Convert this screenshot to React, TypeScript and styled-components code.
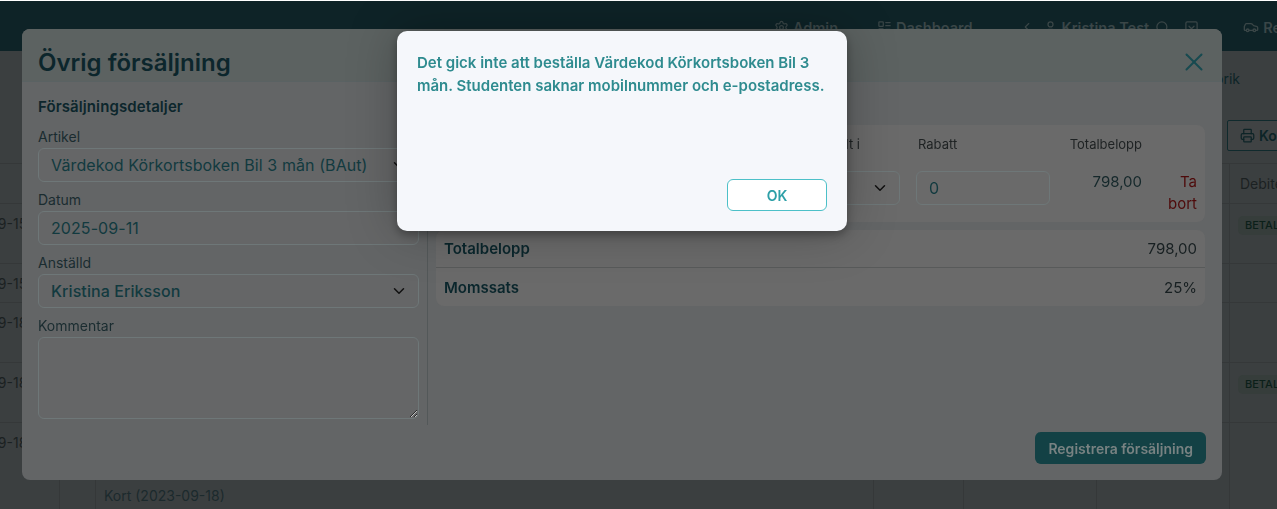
import { Car, ChevronDown, ChevronLeft, LayoutList, Printer, Search, Settings, SquareChevronDown, User, X } from "lucide-react";
import styled, { createGlobalStyle } from "styled-components";

const GlobalStyle = createGlobalStyle`
  html, body {
    margin: 0;
    height: 100%;
    background: #fff;
  }
  * {
    box-sizing: border-box;
  }
  body {
    font-family: Inter, "Noto Sans", sans-serif;
    overflow: hidden;
  }
`;

const rows = [
  { height: 60, date: "2023-09-15", badge: true },
  { height: 39, date: "2023-09-15", badge: false },
  { height: 60, date: "2023-09-18", badge: false },
  { height: 60, date: "2023-09-18", badge: true },
  { height: 90, date: "2023-09-18", badge: false, payment: "Kort (2023-09-18)" },
];

function App() {
  return (
    <>
      <GlobalStyle />
      <Page>
        <TopBar>
          <NavItem $after={39}>
            <Settings size={15} />
            Admin
          </NavItem>
          <NavItem $after={47}>
            <LayoutList size={15} />
            Dashboard
          </NavItem>
          <NavItem $after={9}>
            <ChevronLeft size={14} />
          </NavItem>
          <NavItem $after={6}>
            <User size={15} />
            Kristina Test
          </NavItem>
          <NavItem $after={14}>
            <Search size={15} />
          </NavItem>
          <NavItem $after={44}>
            <SquareChevronDown size={15} />
          </NavItem>
          <NavItem $after={-58}>
            <Car size={16} />
            Registrera
          </NavItem>
        </TopBar>
        <TabRow>Historik</TabRow>
        <ActionRow>
          <OutlineButton>
            <Printer size={15} />
            Kontoutskrift
          </OutlineButton>
        </ActionRow>
        <TableClip>
          <Row $height={40}>
            <Cell />
            <Cell />
            <Cell />
            <Cell />
            <Cell />
            <Cell />
            <Cell $left={10}>Debiterat</Cell>
          </Row>
          {rows.map((row, i) => (
            <Row key={i} $height={row.height}>
              <Cell $left={2}>{row.date}</Cell>
              <Cell />
              <PaymentCell $top={row.payment ? 63 : 10}>{row.payment}</PaymentCell>
              <Cell />
              <Cell />
              <Cell />
              <Cell>{row.badge && <Badge>BETALD</Badge>}</Cell>
            </Row>
          ))}
        </TableClip>
      </Page>

      <Modal>
        <ModalHeader>
          <ModalTitle>Övrig försäljning</ModalTitle>
          <CloseButton>
            <X size={30} strokeWidth={1.6} />
          </CloseButton>
        </ModalHeader>
        <ModalBody>
          <DetailsColumn>
            <SectionTitle>Försäljningsdetaljer</SectionTitle>
            <FieldLabel>Artikel</FieldLabel>
            <SelectBox>
              Värdekod Körkortsboken Bil 3 mån (BAut)
              <ChevronDown size={18} />
            </SelectBox>
            <FieldLabel>Datum</FieldLabel>
            <InputBox>2025-09-11</InputBox>
            <FieldLabel>Anställd</FieldLabel>
            <SelectBox $strong>
              Kristina Eriksson
              <ChevronDown size={18} />
            </SelectBox>
            <FieldLabel>Kommentar</FieldLabel>
            <CommentBox readOnly />
          </DetailsColumn>
          <SummaryColumn>
            <ItemPanel>
              <ItemHeading $right={40}>Betalt i</ItemHeading>
              <ItemHeading $indent={18}>Rabatt</ItemHeading>
              <ItemHeading $align="right">Totalbelopp</ItemHeading>
              <span />
              <ItemCell>
                <PaymentSelect>
                  <ChevronDown size={18} />
                </PaymentSelect>
              </ItemCell>
              <ItemCell $indent={16}>
                <DiscountInput>0</DiscountInput>
              </ItemCell>
              <Amount>798,00</Amount>
              <RemoveLink>Ta bort</RemoveLink>
            </ItemPanel>
            <TotalsPanel>
              <TotalRow>
                <strong>Totalbelopp</strong>
                <span>798,00</span>
              </TotalRow>
              <TotalRow>
                <strong>Momssats</strong>
                <span>25%</span>
              </TotalRow>
            </TotalsPanel>
          </SummaryColumn>
        </ModalBody>
        <ModalFooter>
          <PrimaryButton>Registrera försäljning</PrimaryButton>
        </ModalFooter>
      </Modal>

      <Alert>
        <AlertText>
          Det gick inte att beställa Värdekod Körkortsboken Bil 3 mån. Studenten saknar mobilnummer och e-postadress.
        </AlertText>
        <AlertActions>
          <OkButton>OK</OkButton>
        </AlertActions>
      </Alert>
    </>
  );
}

const Page = styled.div`
  height: 509px;
  margin-top: 1px;
  overflow: hidden;
  background: #3b3f40;
  color: #0d2427;
`;

const TopBar = styled.header`
  height: 50px;
  display: flex;
  align-items: center;
  justify-content: flex-end;
  padding-top: 2px;
  background: #0e2327;
  color: #3a4647;
  font-size: 14.5px;
  font-weight: 600;
`;

const NavItem = styled.div<{ $after: number }>`
  display: flex;
  align-items: center;
  gap: 4px;
  margin-right: ${(p) => p.$after}px;
`;

const TabRow = styled.div`
  height: 69px;
  display: flex;
  justify-content: flex-end;
  padding: 18px 37px 0 0;
  font-size: 14px;
  line-height: 20px;
`;

const ActionRow = styled.div`
  height: 43px;
  display: flex;
  justify-content: flex-end;
  margin-right: -83px;
`;

const OutlineButton = styled.div`
  height: 31px;
  display: flex;
  align-items: center;
  gap: 4px;
  padding: 0 12px;
  border: 1px solid #102a2d;
  border-radius: 2px;
  background: #404344;
  font-size: 14px;
  font-weight: 600;
`;

const TableClip = styled.div`
  margin-left: -54px;
  width: 1500px;
  border-top: 1px solid #353839;
`;

const Row = styled.div<{ $height: number }>`
  height: ${(p) => p.$height}px;
  display: grid;
  grid-template-columns: 114px 36px 778px 90px 133px 133px 1fr;
  border-bottom: 1px solid #353839;
  font-size: 14px;
  line-height: 20px;
  color: #1b2122;
`;

const Cell = styled.div<{ $top?: number; $left?: number }>`
  padding: ${(p) => p.$top ?? 10}px 9px 0 ${(p) => p.$left ?? 8}px;
  border-right: 1px solid #353839;
  white-space: nowrap;
`;

const PaymentCell = styled(Cell)`
  color: #1c2a2d;
`;

const Badge = styled.span`
  display: inline-block;
  height: 19px;
  padding: 0 7px;
  border-radius: 5px;
  background: #363d3b;
  color: #0b1f19;
  font-size: 11px;
  font-weight: 500;
  line-height: 19px;
`;

const Modal = styled.section`
  position: fixed;
  left: 22px;
  top: 29px;
  width: 1200px;
  height: 451px;
  display: flex;
  flex-direction: column;
  border-radius: 8px;
  overflow: hidden;
  background: #636566;
`;

const ModalHeader = styled.div`
  height: 53px;
  flex: none;
  display: flex;
  align-items: center;
  justify-content: space-between;
  padding: 14px 13px 0 16px;
  border-bottom: 1px solid #5a6263;
  background: #5c6261;
`;

const ModalTitle = styled.h2`
  margin: 0;
  font-size: 24px;
  font-weight: 600;
  color: #0c262c;
`;

const CloseButton = styled.div`
  display: flex;
  color: #174a50;
`;

const ModalBody = styled.div`
  flex: 1;
  display: flex;
  align-items: flex-start;
  padding-top: 15px;
`;

const DetailsColumn = styled.div`
  width: 406px;
  height: 328px;
  flex: none;
  padding: 0 8px 0 16px;
  border-right: 1px solid #535859;
`;

const SectionTitle = styled.div`
  margin-bottom: 10px;
  font-size: 15px;
  font-weight: 600;
  line-height: 20px;
  letter-spacing: 0.1px;
  color: #0c262c;
`;

const FieldLabel = styled.div`
  margin: 8px 0 1px;
  font-size: 14px;
  line-height: 20px;
  color: #1a2c30;
`;

const InputBox = styled.div<{ $strong?: boolean }>`
  height: 34px;
  display: flex;
  align-items: center;
  padding: 0 12px;
  border: 1px solid #6e7778;
  border-radius: 6px;
  background: #656667;
  font-size: 16px;
  font-weight: ${(p) => (p.$strong ? 500 : 400)};
  letter-spacing: 0.08px;
  color: #123a3f;
`;

const SelectBox = styled(InputBox)`
  justify-content: space-between;
  svg {
    color: #111;
    margin-right: -2px;
  }
`;

const CommentBox = styled.textarea`
  display: block;
  width: 100%;
  height: 82px;
  padding: 8px 12px;
  border: 1px solid #6e7778;
  border-radius: 6px;
  background: #656667;
  outline: none;
`;

const SummaryColumn = styled.div`
  flex: 1;
  padding: 28px 17px 0 8px;
`;

const ItemPanel = styled.div`
  height: 97px;
  display: grid;
  grid-template-columns: 1fr 150px 92px 55px;
  grid-template-rows: 36px 1fr;
  padding-right: 8px;
  border-radius: 8px;
  background: #6a6a6a;
`;

const ItemHeading = styled.div<{ $align?: string; $indent?: number; $right?: number }>`
  padding: 9px ${(p) => p.$right ?? 0}px 0 ${(p) => p.$indent ?? 0}px;
  text-align: ${(p) => p.$align ?? "left"};
  font-size: 13px;
  line-height: 20px;
  color: #1e2223;
  &:first-child {
    text-align: right;
  }
`;

const ItemCell = styled.div<{ $indent?: number }>`
  padding: 10px 0 0 ${(p) => p.$indent ?? 0}px;
`;

const PaymentSelect = styled.div`
  height: 34px;
  display: flex;
  align-items: center;
  justify-content: flex-end;
  padding-right: 10px;
  border: 1px solid #6e7778;
  border-radius: 6px;
  svg {
    color: #111;
  }
`;

const DiscountInput = styled(PaymentSelect)`
  justify-content: flex-start;
  padding: 0 12px;
  font-size: 16px;
  color: #123a3f;
`;

const Amount = styled.div`
  padding-top: 10px;
  text-align: right;
  font-size: 15px;
  line-height: 22px;
  color: #15282b;
`;

const RemoveLink = styled.div`
  padding: 10px 0 0 26px;
  text-align: right;
  font-size: 15px;
  line-height: 22px;
  color: #4e0a0a;
`;

const TotalsPanel = styled.div`
  margin-top: 8px;
  border-radius: 8px;
  background: #6a6a6a;
`;

const TotalRow = styled.div`
  height: 38px;
  display: flex;
  align-items: center;
  justify-content: space-between;
  padding: 0 8px;
  font-size: 15px;
  color: #171f21;
  &:first-child {
    border-bottom: 1px solid #585a5a;
  }
  strong {
    font-weight: 600;
    color: #0a262c;
  }
`;

const ModalFooter = styled.div`
  display: flex;
  justify-content: flex-end;
  padding: 0 16px 16px;
`;

const PrimaryButton = styled.div`
  height: 32px;
  display: flex;
  align-items: center;
  padding: 0 13px;
  border-radius: 6px;
  background: #134145;
  color: #788282;
  font-size: 14px;
  font-weight: 600;
`;

const Alert = styled.div`
  position: fixed;
  left: 397px;
  top: 31px;
  width: 450px;
  height: 200px;
  display: flex;
  flex-direction: column;
  justify-content: space-between;
  padding: 20px;
  border-radius: 10px;
  background: #f5f7fb;
  box-shadow: 0 4px 10px rgba(0, 0, 0, 0.3), 0 0 50px rgba(0, 0, 0, 0.25);
`;

const AlertText = styled.div`
  font-size: 15px;
  font-weight: 600;
  line-height: 23px;
  color: #2e8b8f;
`;

const AlertActions = styled.div`
  display: flex;
  justify-content: flex-end;
`;

const OkButton = styled.div`
  width: 100px;
  height: 32px;
  display: flex;
  align-items: center;
  justify-content: center;
  border: 1px solid #4cc0c8;
  border-radius: 6px;
  background: #fff;
  color: #2fa0a8;
  font-size: 14px;
  font-weight: 600;
`;

export default App;
